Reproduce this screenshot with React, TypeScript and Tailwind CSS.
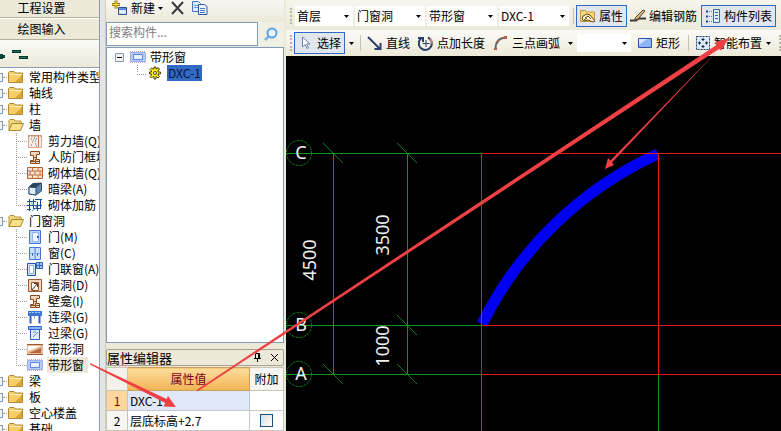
import { useState } from 'react';
import type { ReactNode } from 'react';
import clsx from 'clsx';

interface TreeItem {
  label: string;
  icon: ReactNode;
}

interface TreeGroup {
  label: string;
  items?: TreeItem[];
}

/* ---------- icons ---------- */

function Icon({ children, className }: { children: ReactNode; className?: string }) {
  return (
    <svg viewBox="0 0 16 16" className={clsx('w-4 h-4 shrink-0', className)} fill="none" aria-hidden="true">
      {children}
    </svg>
  );
}

function FolderIcon({ open = false }: { open?: boolean }) {
  return open ? (
    <Icon>
      <path d="M1 13.5V3.5L2 2.5h4l1 1.5h6v2.5" fill="#f3d883" stroke="#b8923a" />
      <path d="M1 13.5L4 6.5h11.500l-3 7z" fill="#fbe189" stroke="#a8842c" />
    </Icon>
  ) : (
    <Icon>
      <path d="M.5 13.5V4l1-1.500h4.500l1 1.500h7.500v9.500z" fill="#f6cf68" stroke="#b08a34" />
      <path d="M1.500 6V5h12v1z" fill="#fff3c0" />
      <path d="M7 13l7-7v7z" fill="#dda43a" />
    </Icon>
  );
}

const ShearWallIcon = (
  <Icon>
    <path d="M1.500 2.500h13v12h-13z" fill="#f6ece8" stroke="#d8a890" />
    <path d="M11.500 2v12" stroke="#c07850" />
    <path d="M1 3h13" stroke="#b86a40" strokeDasharray="2 1" />
    <path d="M4 6h1M7 5h1M5 9h1M8 8h1M4 12h1M8 11h1M9 6h1M6 7h1M9 13h1" stroke="#7a5a70" />
  </Icon>
);

const FrameWallIcon = (
  <Icon>
    <path d="M3.500 2.500h9v3h-3v5h3v4h-9v-3h3v-5h-3z" fill="#f5d6b8" stroke="#8a4a20" />
    <path d="M6 8.500h4M3 12.500h9M8.500 10v4" stroke="#8a4a20" />
  </Icon>
);

const BrickIcon = (
  <Icon>
    <path d="M.5 2.500h15v11H.5z" fill="#fbe3d0" stroke="#b0622c" />
    <path d="M1 6h14M1 10h14M5.500 2.500V6M11 2.500V6M3 6v4M8 6v4M13 6v4M5.500 10v4M11 10v4" stroke="#c0703a" />
  </Icon>
);

const HiddenBeamIcon = (
  <Icon>
    <path d="M2 6l4-3.500 8.500-.5v8L9 14l-7-1z" fill="#5f87b0" stroke="#34506e" />
    <path d="M2 6l7 .5V14l-7-1z" fill="#dcebf8" stroke="#34506e" />
    <path d="M2 6l4-3.500 8.500-.5L9 6.500z" fill="#27415c" />
  </Icon>
);

const RebarIcon = (
  <Icon>
    <path d="M0 4.500h9M0 8.500h15M2.500 2v12M6.500 2v9M0 12.500h4M10.500 5v9M13.500 2v9M8 2.500h7M6 11.500h8" stroke="#1c4a9c" />
    <path d="M4 6l6 4M5 14l5-4" stroke="#4c88dc" />
  </Icon>
);

const DoorIcon = (
  <Icon>
    <path d="M2.500 1.500h11v13h-11z" fill="#b9d4fb" stroke="#4474d0" />
    <path d="M5.500 3.500h6v9h-6z" fill="#edf5ff" stroke="#8eb2ee" />
    <path d="M10 8h1.500" stroke="#1c4298" strokeWidth="2" />
  </Icon>
);

const WindowIcon = (
  <Icon>
    <path d="M2.500 2.500h11v12h-11z" fill="#c9dffc" stroke="#4474d0" />
    <path d="M8 2.500v12" stroke="#4b7fd8" />
    <path d="M3 8.500h10" stroke="#8eb2ee" />
    <path d="M5.500 8.500v2M10.500 8.500v2" stroke="#1c4298" />
  </Icon>
);

const DoorWindowIcon = (
  <Icon>
    <path d="M.5 2.500h8v12h-8z" fill="#cfe2fd" stroke="#2450b4" />
    <path d="M2.500 4.500h4v8h-4z" fill="#fff" stroke="#8eb2ee" />
    <path d="M9.500 1.500h6v6h-6z" fill="#a9c8fa" stroke="#2d5fc0" />
    <path d="M12.500 2v6M10 4.500h5" stroke="#2d5fc0" />
  </Icon>
);

const WallHoleIcon = (
  <Icon>
    <path d="M1.500 2.500h13v12h-13z" fill="#f3d3bc" stroke="#9a5a34" />
    <path d="M4.500 5.500h7v8h-7z" fill="#fff" stroke="#9a5a30" />
    <path d="M5 13l5-6M7 6.500h3.500V10" stroke="#5c3018" />
  </Icon>
);

const LinkBeamIcon = (
  <Icon>
    <path d="M1 2h14v5H1z" fill="#3a76d8" />
    <path d="M2 3.500h12" stroke="#a8ccff" strokeDasharray="2 1" />
    <path d="M3.500 7v7.500M12.500 7v7.500" stroke="#2d5fc0" strokeWidth="2" />
    <path d="M7.500 7v3" stroke="#8bb4f5" />
  </Icon>
);

const LintelIcon = (
  <Icon>
    <path d="M1.500 1.500h13v3h-13z" fill="#8db8f8" stroke="#2d5fc0" />
    <path d="M3.500 4.500h9v10h-9z" fill="#dfecff" stroke="#2d5fc0" />
    <path d="M6 12l5-5M6 7h3" stroke="#5f93e6" />
  </Icon>
);

const StripHoleIcon = (
  <Icon>
    <path d="M0 3h16v11H0z" fill="#e8b894" />
    <path d="M0 3.500h16M0 13.500h16" stroke="#9a5a34" />
    <path d="M1 5h13L1 10z" fill="#fff" />
    <path d="M2 12l12-5v5z" fill="#b0683c" />
  </Icon>
);

function StripWindowIcon() {
  return (
    <Icon>
      <path d="M0 2.500h16M0 13.500h16" stroke="#d9a0b0" strokeDasharray="1 1" />
      <path d="M.5 3.500h15v9H.5z" fill="#b4caf8" stroke="#98b0ee" />
      <path d="M3.500 5.500h9v5h-9z" fill="#eaf2ff" stroke="#6384d8" />
    </Icon>
  );
}

function Caret() {
  return (
    <svg viewBox="0 0 5 3" className="w-[5px] h-[3px] shrink-0" aria-hidden="true">
      <path d="M0 0h5L2.500 3z" fill="#000" />
    </svg>
  );
}

/* ---------- component type tree ---------- */

const groups: TreeGroup[] = [
  { label: '常用构件类型' },
  { label: '轴线' },
  { label: '柱' },
  {
    label: '墙',
    items: [
      { label: '剪力墙(Q)', icon: ShearWallIcon },
      { label: '人防门框墙', icon: FrameWallIcon },
      { label: '砌体墙(Q)', icon: BrickIcon },
      { label: '暗梁(A)', icon: HiddenBeamIcon },
      { label: '砌体加筋', icon: RebarIcon },
    ],
  },
  {
    label: '门窗洞',
    items: [
      { label: '门(M)', icon: DoorIcon },
      { label: '窗(C)', icon: WindowIcon },
      { label: '门联窗(A)', icon: DoorWindowIcon },
      { label: '墙洞(D)', icon: WallHoleIcon },
      { label: '壁龛(I)', icon: FrameWallIcon },
      { label: '连梁(G)', icon: LinkBeamIcon },
      { label: '过梁(G)', icon: LintelIcon },
      { label: '带形洞', icon: StripHoleIcon },
      { label: '带形窗', icon: <StripWindowIcon /> },
    ],
  },
  { label: '梁' },
  { label: '板' },
  { label: '空心楼盖' },
  { label: '基础' },
];

function Sidebar() {
  const [selected, setSelected] = useState('带形窗');

  return (
    <aside className="w-[100px] shrink-0 flex flex-col overflow-hidden border-r border-[#8e9db5]">
      <button className="h-[18px] shrink-0 pb-1 pr-4 text-center border-b border-[#b5b19c] bg-[#ece9d8]">工程设置</button>
      <button className="h-[22px] shrink-0 pr-4 text-center border-t border-t-white border-b border-b-[#b5b19c] bg-[#ece9d8]">
        绘图输入
      </button>
      <div className="h-[27px] shrink-0 flex items-center bg-linear-to-b from-[#fbfbf8] to-[#ece9d8]">
        <svg viewBox="0 0 28 14" className="w-7 h-[14px]" fill="none" aria-label="展开 折叠">
          <path d="M0 9.500h5M1.500 7v5" stroke="#04433a" strokeWidth="3" />
          <path d="M12 4.500h9M19 10.500h9" stroke="#04332c" strokeWidth="3" />
          <path d="M13 4.500h7M20 10.500h7" stroke="#1c7a68" />
        </svg>
      </div>
      <ul className="flex-1 min-h-0 bg-white border-t border-[#8e9db5] pt-px">
        {groups.map((group) => (
          <li key={group.label}>
            <div className="flex items-center h-4 whitespace-nowrap">
              <span className="w-[3px] h-[9px] shrink-0 border border-l-0 border-[#7f9db9] bg-[#f4f4ee]" />
              <span className="w-1 mr-px shrink-0 border-t border-dotted border-[#a0a0a0]" />
              <FolderIcon open={!!group.items} />
              <span className="pl-[5px]">{group.label}</span>
            </div>
            {group.items && (
              <ul>
                {group.items.map((item, i) => (
                  <li key={item.label} className="flex items-center h-4 pl-4 whitespace-nowrap">
                    <svg viewBox="0 0 11 16" className="w-[11px] h-4 shrink-0" aria-hidden="true">
                      <path
                        d={i === group.items!.length - 1 ? 'M.5 0v8M0 8.500h11' : 'M.5 0v16M0 8.500h11'}
                        stroke="#a0a0a0"
                        strokeDasharray="1 1"
                      />
                    </svg>
                    {item.icon}
                    <button
                      onClick={() => setSelected(item.label)}
                      className={clsx('h-4 ml-1 pl-px pr-1 leading-4', selected === item.label && 'bg-[#ece9d8]')}
                    >
                      {item.label}
                    </button>
                  </li>
                ))}
              </ul>
            )}
          </li>
        ))}
      </ul>
    </aside>
  );
}

/* ---------- component list and property editor ---------- */

function ComponentPanel() {
  return (
    <section className="w-[178px] shrink-0 flex flex-col">
      <div className="h-[22px] shrink-0 flex items-center pl-[5px] pb-1.5 bg-linear-to-b from-[#f8f7f2] to-[#ece9d8]">
        <button className="flex items-center gap-[3px]">
          <svg viewBox="0 0 17 16" className="w-[17px] h-4" fill="none" aria-hidden="true">
            <path d="M7.500 7.500h8v7h-8z" fill="#d5e6fb" stroke="#2c4a90" />
            <path d="M8 8h7v2H8z" fill="#5c8de0" />
            <path d="M9 11.500h2M12 11.500h2" stroke="#fff" />
            <path d="M5 .5v8M1 4.500h8" stroke="#9c7a10" strokeWidth="3" />
            <path d="M5 1v7M1.500 4.500h7" stroke="#ffe04a" />
          </svg>
          新建
          <Caret />
        </button>
        <button aria-label="删除" className="ml-2">
          <svg viewBox="0 0 13 14" className="w-[13px] h-[14px]" fill="none" aria-hidden="true">
            <path d="M1 1l11 12M12 1L1 13" stroke="#3a3a40" strokeWidth="2" />
          </svg>
        </button>
        <button aria-label="复制" className="ml-2">
          <Icon>
            <path d="M.5 1.500h6l2 2v8h-8z" fill="#dcebff" stroke="#4a78c0" />
            <path d="M2 5.500h5M2 7.500h5" stroke="#6a98dc" />
            <path d="M6.500 4.500h6l2.500 2v8H6.500z" fill="#eaf3ff" stroke="#2d5aa8" />
            <path d="M8 8.500h5M8 10.500h5M8 12.500h5" stroke="#4a78c0" />
          </Icon>
        </button>
      </div>
      <div className="h-[25px] shrink-0 flex pb-px">
        <input
          type="text"
          aria-label="搜索构件"
          placeholder="搜索构件..."
          className="flex-1 min-w-0 px-0.5 pb-1 bg-white border border-[#7f9db9] placeholder:text-[#808080] outline-none"
        />
        <button aria-label="搜索" className="w-[26px] flex items-center justify-center bg-[#f1f0e6]">
          <Icon>
            <path d="M6 10l-4 4" stroke="#88b4dc" strokeWidth="3" />
            <circle cx="9" cy="7" r="4.500" fill="#e6f4ff" stroke="#5ea4dc" strokeWidth="2" />
          </Icon>
        </button>
      </div>
      <div className="flex-1 min-h-0 pt-px pl-2 bg-white border border-[#7f9db9]">
        <div className="h-4 flex items-center">
          <svg viewBox="0 0 9 9" className="w-[9px] h-[9px]" aria-hidden="true">
            <path d="M.5.5h8v8h-8z" fill="#f4f3ec" stroke="#7f9db9" />
            <path d="M2 4.500h5" stroke="#000" />
          </svg>
          <span className="ml-1.5 mr-1">
            <StripWindowIcon />
          </span>
          带形窗
        </div>
        <div className="h-4 flex items-center pl-5">
          <svg viewBox="0 0 12 16" className="w-3 h-4" aria-hidden="true">
            <path d="M2.500 0v8M2 9.500h10" stroke="#909090" strokeDasharray="1 1" />
          </svg>
          <Icon className="mr-1">
            <path
              d="M7 2h2v2h1l1-1.500 1.500 1.500L11 6v1h2.500v2H11v1l1.500 1.500L11 13l-1.500-1.500H9V14H7v-2.500H6L4.500 13 3 11.500 4.500 10V9H2.500V7h2V6L3 4.500 4.500 3 6 4h1z"
              fill="#ffee20"
              stroke="#4a4200"
            />
            <circle cx="8" cy="8" r="1.500" fill="#fff" stroke="#4a4200" />
          </Icon>
          <button className="h-4 px-px leading-4 bg-[#316ac5] text-[#06123c]">DXC-1</button>
        </div>
      </div>
      <PropertyEditor />
    </section>
  );
}

function PropertyEditor() {
  const [extra, setExtra] = useState(false);

  return (
    <div className="shrink-0 pt-1.5">
      <div className="flex items-center h-[17px] pr-1 border border-[#a5a292] rounded-xs">
        <h2 className="flex-1 text-[13px]">属性编辑器</h2>
        <button aria-label="固定" className="mr-2">
          <svg viewBox="0 0 9 9" className="w-[9px] h-[9px]" fill="none" aria-hidden="true">
            <path d="M2.500 5V.5h4V5M1 5.500h7M4.500 5.500V9" stroke="#000" />
            <path d="M5.500 1v4" stroke="#000" />
          </svg>
        </button>
        <button aria-label="关闭">
          <svg viewBox="0 0 9 9" className="w-[9px] h-[9px]" aria-hidden="true">
            <path d="M1 1l7 7M8 1L1 8" stroke="#000" />
          </svg>
        </button>
      </div>
      <table className="w-full mt-px table-fixed border-collapse bg-white border border-[#7f9db9] text-center">
        <thead>
          <tr className="h-[23px]">
            <th className="w-[21px] border border-[#c8c5b5] bg-[#f3f2ea]" />
            <th className="font-normal border border-[#c8a060] bg-linear-to-b from-[#fbdc9c] to-[#f2b551] text-[#7a0020]">属性值</th>
            <th className="w-[34px] font-normal border border-[#c8c5b5] bg-[#f6f5ef]">附加</th>
          </tr>
        </thead>
        <tbody>
          <tr className="h-5">
            <th className="font-normal border border-[#c8c5b5] bg-[#fcd69a] text-[#7a0020]">1</th>
            <td className="pl-0.5 text-left border border-[#c0c8d4] bg-[#dfe8f6]">DXC-1</td>
            <td className="border border-[#c8c8c8]" />
          </tr>
          <tr className="h-5">
            <th className="font-normal border border-[#c8c5b5] bg-[#f6f5ef]">2</th>
            <td className="pl-0.5 text-left border border-[#c8c8c8]">层底标高+2.7</td>
            <td className="border border-[#c8c8c8]">
              <input
                type="checkbox"
                aria-label="附加"
                checked={extra}
                onChange={(e) => setExtra(e.target.checked)}
                className="block mx-auto w-[13px] h-[13px] appearance-none border border-[#1c5180] bg-linear-to-br from-[#dcdcd7] to-white checked:bg-[#1c5180]"
              />
            </td>
          </tr>
        </tbody>
      </table>
    </div>
  );
}

/* ---------- toolbars ---------- */

function Grip() {
  return <span className="w-0.5 h-4 shrink-0 border-l-2 border-dotted border-[#b8b5a0]" />;
}

function Divider({ className }: { className?: string }) {
  return <span className={clsx('w-px h-4 shrink-0 bg-[#c5c2b0]', className)} />;
}

function Combo({ label, options, className }: { label: string; options: string[]; className?: string }) {
  return (
    <label className={clsx('relative flex items-center shrink-0 bg-white', className)}>
      <select aria-label={label} className="w-full h-full px-0.5 appearance-none outline-none">
        {options.map((option) => (
          <option key={option}>{option}</option>
        ))}
      </select>
      <span className="absolute right-1 pointer-events-none">
        <Caret />
      </span>
    </label>
  );
}

interface ToolButtonProps {
  icon: ReactNode;
  label: string;
  active?: boolean;
  className?: string;
}

function ToolButton({ icon, label, active, className }: ToolButtonProps) {
  return (
    <button
      className={clsx(
        'flex items-center gap-[3px] h-[22px] shrink-0 whitespace-nowrap',
        active && 'border border-[#316ac5] bg-[#e1e6ee] px-[3px]',
        className,
      )}
    >
      {icon}
      {label}
    </button>
  );
}

function Toolbars() {
  return (
    <div className="shrink-0 bg-[#ece9d8] overflow-hidden">
      <div className="h-[30px] flex items-center pl-1 pt-0.5 bg-linear-to-b from-[#f6f5ee] to-[#ece9d8]">
        <Grip />
        <Combo label="楼层" options={['首层']} className="w-[58px] h-5 ml-[3px]" />
        <Combo label="构件类型" options={['门窗洞']} className="w-[70px] h-5 ml-0.5" />
        <Combo label="构件" options={['带形窗']} className="w-[70px] h-5 ml-0.5" />
        <Combo label="构件名称" options={['DXC-1']} className="w-[70px] h-5 ml-0.5" />
        <Divider className="ml-1 mr-0.5" />
        <ToolButton
          active
          label="属性"
          icon={
            <Icon>
              <path d="M.5 13.500v-11h5l1 1.500h8v9.500z" fill="#fbd77c" stroke="#c8963c" />
              <path d="M3 8l4-2 3 1 5 6-2 1-5-2-4 1-2-2z" fill="#fff0d0" stroke="#6b4a18" />
              <path d="M5 10l3-2 3 3M4 12l3-2" stroke="#6b4a18" />
            </Icon>
          }
        />
        <ToolButton
          label="编辑钢筋"
          className="ml-[3px]"
          icon={
            <Icon>
              <path d="M0 12.500h6l3-2h7" stroke="#3a3a3a" strokeWidth="2" />
              <path d="M5 10l8-8 2 1-7 8-3 1z" fill="#d8b880" stroke="#5a4428" />
            </Icon>
          }
        />
        <ToolButton
          active
          label="构件列表"
          className="ml-1"
          icon={
            <Icon>
              <path d="M1 3.500h2M1 8.500h2M1 13.500h2" stroke="#1c4298" strokeWidth="2" />
              <path d="M4 3.500h3M4 8.500h3M4 13.500h3" stroke="#5a82c8" strokeDasharray="1 1" />
              <path d="M8.500 1.500h6v13h-6z" fill="#e3eefc" stroke="#3a66b0" />
              <path d="M10 4.500h3M10 7.500h3M10 10.500h3" stroke="#3a66b0" />
            </Icon>
          }
        />
      </div>
      <div className="h-[26px] flex items-center pl-1 bg-linear-to-b from-[#fbfaf6] to-[#ece9d8]">
        <Grip />
        <ToolButton
          active
          label="选择"
          className="ml-0.5"
          icon={
            <Icon>
              <path d="M4.500 2v10l2.500-2.500 2 4 1.500-.8L8.700 9H12z" fill="#fff" stroke="#6a7ea8" />
            </Icon>
          }
        />
        <button aria-label="选择方式" className="ml-1">
          <Caret />
        </button>
        <Divider className="ml-1.5 mr-1.5" />
        <ToolButton
          label="直线"
          icon={
            <Icon>
              <path d="M1 2l12 12" stroke="#2c3f6c" strokeWidth="2" />
              <path d="M13.500 8v6h-6" stroke="#2c3f6c" strokeWidth="2" />
            </Icon>
          }
        />
        <ToolButton
          label="点加长度"
          className="ml-2"
          icon={
            <Icon>
              <path d="M3 3.500A6.500 6.500 0 1 0 10 2.500" stroke="#28406e" strokeWidth="2" />
              <path d="M8 5v7M4.500 8.500h7" stroke="#28406e" />
              <path d="M0 3h5v4" stroke="#28406e" strokeWidth="2" />
              <path d="M12 3.500q2 2 2 5" stroke="#c88a70" strokeWidth="2" />
            </Icon>
          }
        />
        <ToolButton
          label="三点画弧"
          className="ml-2"
          icon={
            <Icon>
              <path d="M2.500 14C2.500 7 6 3 12.500 2.500" stroke="#70686c" strokeWidth="2" />
              <path d="M1 13h3v2H1zM11 1h3v3h-3zM4 5h2v2H4z" fill="#c05a48" />
            </Icon>
          }
        />
        <button aria-label="画弧方式" className="ml-2">
          <Caret />
        </button>
        <Combo label="画弧参数" options={['']} className="w-[54px] h-[18px] ml-1" />
        <ToolButton
          label="矩形"
          className="ml-1.5"
          icon={
            <Icon>
              <path d="M1.500 3.500h13v9h-13z" fill="#8cb4f8" stroke="#2c50b0" />
              <path d="M2 4h8L2 10z" fill="#d4e4ff" />
            </Icon>
          }
        />
        <Divider className="ml-2 mr-1.5" />
        <ToolButton
          label="智能布置"
          icon={
            <Icon>
              <path d="M1.500 1.500h13v13h-13z" fill="#dceafa" stroke="#1c3a70" strokeDasharray="2 1" />
              <path d="M8 3v3M8 10v3M3 8h3M10 8h3" stroke="#102040" />
              <path d="M6.500 4.500h3M6.500 11.500h3M4.500 6.500v3M11.500 6.500v3" stroke="#102040" />
            </Icon>
          }
        />
        <button aria-label="布置方式" className="ml-1">
          <Caret />
        </button>
        <span className="flex-1" />
        <Grip />
      </div>
    </div>
  );
}

/* ---------- drawing area ---------- */

const axes = [
  { name: 'C', y: 97 },
  { name: 'B', y: 269 },
  { name: 'A', y: 318 },
];

const ticks = [
  [47, 97],
  [121, 97],
  [121, 269],
  [47, 318],
  [121, 318],
];

const dimensions = [
  { value: '4500', x: 30, y: 204 },
  { value: '3500', x: 103, y: 179 },
  { value: '1000', x: 103, y: 290 },
];

function DrawingArea() {
  return (
    <svg className="flex-1 min-h-0 w-full bg-black" fill="none" role="img" aria-label="绘图区">
      <g fill="#0c961e">
        {axes.map((axis) => (
          <rect key={axis.name} x="0" y={axis.y} width="195" height="1" />
        ))}
        <rect x="47" y="97" width="1" height="221" />
        <rect x="121" y="97" width="1" height="221" />
        <rect x="195" y="319" width="1" height="100%" />
        <rect x="372" y="319" width="1" height="100%" />
      </g>
      <g stroke="#0b7a1c">
        {ticks.map(([x, y]) => (
          <path key={`${x}-${y}`} d={`M${x - 10} ${y - 10}l20 20`} />
        ))}
        {axes.map((axis) => (
          <circle key={axis.name} cx="13" cy={axis.y} r="12.500" strokeDasharray="3 1" />
        ))}
      </g>
      <path d="M196 268A364 364 0 0 1 372 98" stroke="#0000f5" strokeWidth="11" />
      <g fill="#f01414">
        {axes.map((axis) => (
          <rect key={axis.name} x="195" y={axis.y} width="100%" height="1" />
        ))}
        <rect x="195" y="97" width="1" height="221" />
        <rect x="372" y="97" width="1" height="221" />
      </g>
      <g fill="#f0f0f0" fontFamily='"Noto Sans", sans-serif' fontSize="18" textAnchor="middle">
        {axes.map((axis) => (
          <text key={axis.name} x="15" y={axis.y + 6}>
            {axis.name}
          </text>
        ))}
        {dimensions.map((dim) => (
          <text key={dim.value} transform={`translate(${dim.x} ${dim.y}) rotate(-90)`}>
            {dim.value}
          </text>
        ))}
      </g>
    </svg>
  );
}

/* Callout arrows drawn over the whole window */
function Annotations() {
  return (
    <svg className="absolute inset-0 w-full h-full pointer-events-none" fill="#f04044" aria-hidden="true">
      <path d="M90 363L166.500 399l1.500-3 8 11-12.500-.5 1.800-3.500L90 364.500z" />
      <path d="M196.500 390L716.500 45l-.5-3 13-4-8 12.500-2-1.500L197.500 391.500z" />
      <path d="M722 46L612 162.500l2 2.500L605 169l3-11 2.500 2.500z" />
    </svg>
  );
}

export default function App() {
  return (
    <div className='relative flex h-screen overflow-hidden bg-[#ece9d8] text-black text-xs leading-4 font-["Noto_Sans_CJK_SC",sans-serif]'>
      <Sidebar />
      <div className="w-1.5 shrink-0 border-r border-[#cfccba] bg-[#e4e4e2]" />
      <ComponentPanel />
      <div className="w-0.5 shrink-0" />
      <main className="flex-1 min-w-0 flex flex-col">
        <Toolbars />
        <DrawingArea />
      </main>
      <Annotations />
    </div>
  );
}
